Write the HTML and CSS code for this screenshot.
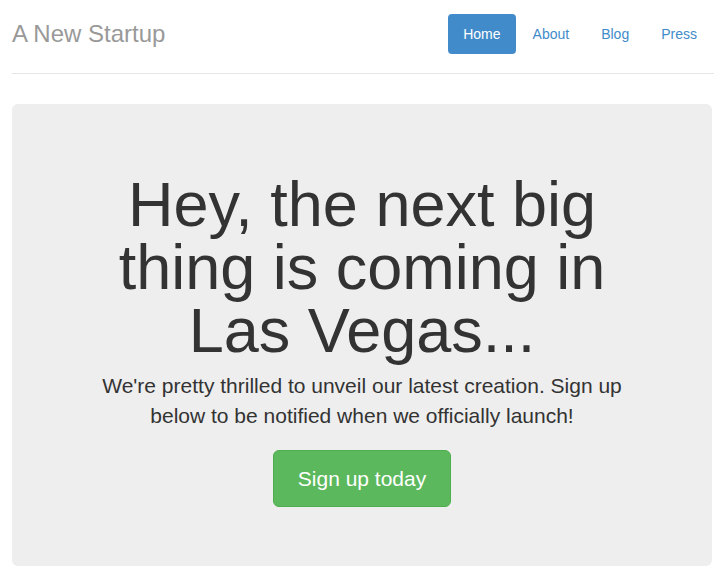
FILE: index.html
```html
<!DOCTYPE html>
<html lang="en">

<head>
    <meta charset="UTF-8">
    <title>A New Startup</title>
    <link rel="stylesheet" href="styles.css">
</head>

<body>
    <div class="container">
        <div class="header">
            <h3 class="brand">A New Startup</h3>
            <ul class="nav-pills">
                <li class="active"><a href="#">Home</a></li>
                <li><a href="#">About</a></li>
                <li><a href="#">Blog</a></li>
                <li><a href="#">Press</a></li>
            </ul>
        </div>

        <div class="jumbotron">
            <h1>Hey, the next big thing is coming in Las Vegas...</h1>
            <p class="lead">We're pretty thrilled to unveil our latest creation. Sign up below to be notified when we officially launch!</p>
            <p><a class="btn-signup" href="#">Sign up today</a></p>
        </div>
    </div>
</body>

</html>
```

FILE: styles.css
```css
body {
    margin: 0;
    font-family: "Liberation Sans", Arial, sans-serif;
    font-size: 14px;
    line-height: 1.42857;
    color: #333;
    background-color: #fff;
}

.container {
    padding: 14px 2px 0 12px;
}

.header {
    display: flex;
    justify-content: space-between;
    align-items: center;
    margin-right: -2px;
    padding-right: 2px;
    padding-bottom: 19px;
    border-bottom: 1px solid #e5e5e5;
}

.brand {
    margin: 0;
    font-size: 24px;
    font-weight: normal;
    line-height: 40px;
    color: #999;
}

.nav-pills {
    display: flex;
    margin: 0;
    padding: 0;
    list-style: none;
}

.nav-pills li {
    margin-left: 2px;
}

.nav-pills a {
    display: block;
    padding: 10px 15px;
    line-height: 20px;
    color: #428bca;
    text-decoration: none;
    border-radius: 4px;
}

.nav-pills .active a {
    color: #fff;
    background-color: #428bca;
}

.jumbotron {
    margin-top: 30px;
    padding: 48px 60px 49px;
    background-color: #eee;
    border-radius: 6px;
    text-align: center;
}

.jumbotron h1 {
    margin: 21px 0 9px;
    font-size: 63px;
    font-weight: normal;
    line-height: 1;
    color: #333;
}

.jumbotron p {
    margin: 0 0 10px;
}

.jumbotron .lead {
    margin-bottom: 19px;
    font-size: 21px;
    line-height: 30px;
}

.btn-signup {
    display: inline-block;
    padding: 14px 24px;
    font-size: 21px;
    line-height: 27px;
    color: #fff;
    text-decoration: none;
    background-color: #5cb85c;
    border: 1px solid #4cae4c;
    border-radius: 6px;
}
```
